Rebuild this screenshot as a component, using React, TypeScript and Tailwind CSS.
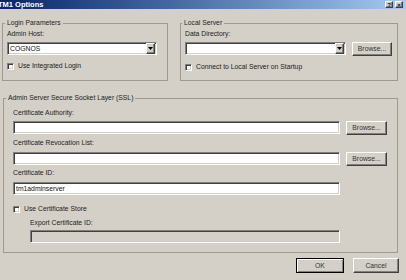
import React from "react";

const sunken =
  "border border-t-[#808080] border-l-[#808080] border-r-white border-b-white shadow-[inset_1px_1px_0_#404040,inset_-1px_-1px_0_#d4d0c8]";
const raised =
  "border border-t-white border-l-white border-r-[#404040] border-b-[#404040] shadow-[inset_-1px_-1px_0_#808080] bg-[#d4d0c8]";

function Arrow() {
  return (
    <svg width="5" height="3" viewBox="0 0 5 3">
      <path d="M0 0h5L2.5 3z" fill="#000" />
    </svg>
  );
}

function Combo({ width, value }: { width: string; value?: string }) {
  return (
    <div className={`${sunken} ${width} h-[13px] bg-white flex items-center`}>
      <span className="pl-[2px] leading-[8px] text-[#111]">{value}</span>
      <div className={`${raised} ml-auto mr-[1px] w-[9px] h-[11px] flex items-center justify-center`}>
        <Arrow />
      </div>
    </div>
  );
}

function Button({ children, w, h }: { children: React.ReactNode; w: string; h: string }) {
  return (
    <div className={`${raised} ${w} ${h} flex items-center justify-center leading-[8px] text-[#333]`}>
      {children}
    </div>
  );
}

function Check({ label }: { label: string }) {
  return (
    <div className="flex items-center h-[8px]">
      <div className={`${sunken} w-[7px] h-[7px] bg-white`} />
      <span className="ml-[4px] leading-[8px]">{label}</span>
    </div>
  );
}

export default function App() {
  return (
    <div className="w-[406px] h-[280px] bg-[#d4d0c8] font-['Liberation_Sans',Arial,sans-serif] text-[6.8px] text-[#222] flex flex-col overflow-hidden">
      {/* title bar */}
      <div className="h-[9px] bg-linear-to-r from-[#0a246a] to-[#a6caf0] flex items-center overflow-hidden">
        <span className="-ml-[2px] text-white font-bold text-[7.5px] leading-[9px] whitespace-nowrap">
          TM1 Options
        </span>
        <div className="ml-auto mr-[3px] flex gap-[2px]">
          <div className={`${raised} w-[8px] h-[7px] flex items-center justify-center text-[6px] font-bold leading-[6px] text-black`}>
            ?
          </div>
          <div className={`${raised} w-[8px] h-[7px] flex items-center justify-center text-[6px] font-bold leading-[6px] text-black`}>
            ×
          </div>
        </div>
      </div>

      {/* top row */}
      <div className="flex mt-[10px] pl-[2px]">
        <fieldset className="w-[166px] h-[62px] border border-[#9d9a93]">
          <legend className="ml-[2px] px-[2px] leading-[8px]">Login Parameters</legend>
          <div className="pl-[4px] pt-[3px] flex flex-col items-start">
            <div className="leading-[8px]">Admin Host:</div>
            <div className="mt-[4px]">
              <Combo width="w-[150px]" value="COGNOS" />
            </div>
            <div className="mt-[7px]">
              <Check label="Use Integrated Login" />
            </div>
          </div>
        </fieldset>

        <fieldset className="ml-[12px] w-[218px] h-[62px] border border-[#9d9a93]">
          <legend className="ml-[1px] px-[2px] leading-[8px]">Local Server</legend>
          <div className="pl-[4px] pt-[3px] flex flex-col items-start">
            <div className="leading-[8px]">Data Directory:</div>
            <div className="mt-[4px] flex items-start">
              <Combo width="w-[161px]" />
              <div className="ml-[6px]">
                <Button w="w-[40px]" h="h-[14px]">Browse...</Button>
              </div>
            </div>
            <div className="mt-[7px]">
              <Check label="Connect to Local Server on Startup" />
            </div>
          </div>
        </fieldset>
      </div>

      {/* SSL */}
      <fieldset className="mt-[13px] ml-[3px] w-[395px] h-[159px] border border-[#9d9a93]">
        <legend className="ml-[2px] px-[2px] leading-[8px]">Admin Server Secure Socket Layer (SSL)</legend>
        <div className="pl-[9px] pt-[7px] flex flex-col items-start">
          <div className="leading-[8px]">Certificate Authority:</div>
          <div className="mt-[4px] flex items-start">
            <div className={`${sunken} w-[327px] h-[13px] bg-white`} />
            <div className="ml-[6px]">
              <Button w="w-[41px]" h="h-[14px]">Browse...</Button>
            </div>
          </div>

          <div className="mt-[4px] leading-[8px]">Certificate Revocation List:</div>
          <div className="mt-[5px] flex items-start">
            <div className={`${sunken} w-[327px] h-[13px] bg-white`} />
            <div className="ml-[6px]">
              <Button w="w-[41px]" h="h-[14px]">Browse...</Button>
            </div>
          </div>

          <div className="mt-[3px] leading-[8px]">Certificate ID:</div>
          <div className={`${sunken} mt-[5px] w-[327px] h-[13px] bg-white flex items-center`}>
            <span className="pl-[2px] leading-[8px] text-[#111]">tm1adminserver</span>
          </div>

          <div className="mt-[10px]">
            <Check label="Use Certificate Store" />
          </div>

          <div className="pl-[17px] flex flex-col items-start">
            <div className="mt-[6px] leading-[8px]">Export Certificate ID:</div>
            <div className={`${sunken} mt-[3px] w-[310px] h-[13px] bg-[#d4d0c8]`} />
          </div>
        </div>
      </fieldset>

      {/* bottom buttons */}
      <div className="mt-[5px] flex justify-end pr-[7px]">
        <div className="w-[48px] h-[15px] border border-black shadow-[inset_1px_1px_0_#fff,inset_-1px_-1px_0_#808080] bg-[#d4d0c8] flex items-center justify-center leading-[8px] text-[#333]">
          OK
        </div>
        <div className="ml-[9px]">
          <Button w="w-[46px]" h="h-[15px]">Cancel</Button>
        </div>
      </div>
    </div>
  );
}
